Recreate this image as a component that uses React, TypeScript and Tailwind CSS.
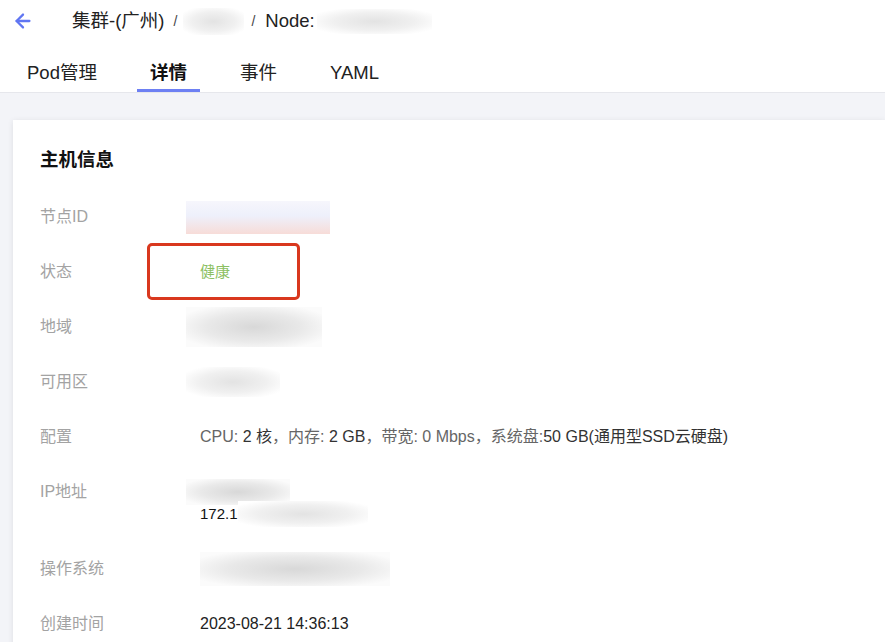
import React from "react";
import { ArrowLeft } from "lucide-react";

const font = { fontFamily: '"Liberation Sans", "Noto Sans CJK SC", sans-serif' };

function Blur({ w, h, tone = "gray", className = "" }: { w: number; h: number; tone?: "gray" | "pink" | "light"; className?: string }) {
  const bg =
    tone === "pink"
      ? "bg-[linear-gradient(180deg,#f6f6fc_0%,#eef0fb_45%,#f7dcd8_100%)]"
      : tone === "light"
      ? "bg-[radial-gradient(ellipse_at_center,#e3e3e3_0%,#f0f0f0_50%,#ffffff_85%)]"
      : "bg-[radial-gradient(ellipse_at_center,#d8d8d8_0%,#e9e9e9_50%,#fbfbfb_85%)]";
  return <span className={`block shrink-0 ${bg} ${className}`} style={{ width: w, height: h, marginTop: (22 - h) / 2, marginBottom: (22 - h) / 2 }} />;
}

function Row({ label, children, tall = false }: { label: string; children: React.ReactNode; tall?: boolean }) {
  return (
    <div className={`flex pt-[16px] ${tall ? "h-[77px]" : "h-[55px]"}`}>
      <div className="w-[160px] shrink-0 text-[16px] leading-[22px] text-[#a3a3a3]">{label}</div>
      <div className="text-[15px] leading-[22px] text-[#333] flex flex-col">{children}</div>
    </div>
  );
}

export default function App() {
  return (
    <div className="w-[885px] h-[642px] overflow-hidden bg-[#f3f4f8]" style={font}>
      <div className="bg-white border-b border-[#e6e7ec]">
        <div className="flex items-center h-[42px] pl-[12px]">
          <ArrowLeft size={22} strokeWidth={2.5} className="text-[#6076f2]" />
          <div className="flex items-center ml-[38px] text-[18.5px] text-[#222]">
            <span>集群-(广州)</span>
            <span className="ml-[9px] text-[14px] text-[#444]">/</span>
            <Blur w={61} h={27} tone="light" className="ml-[6px]" />
            <span className="ml-[7px] text-[14px] text-[#444]">/</span>
            <span className="ml-[10px]">Node:</span>
            <Blur w={115} h={25} tone="light" className="ml-[2px]" />
          </div>
        </div>
        <div className="flex pl-[14px] gap-[27px] h-[50px] items-end">
          {["Pod管理", "详情", "事件", "YAML"].map((t) => (
            <div
              key={t}
              className={`px-[13px] pb-[3px] text-[18.5px] leading-[26px] border-b-[3px] ${
                t === "详情" ? "border-[#6d80f3] font-bold text-[#111]" : "border-transparent text-[#222]"
              }`}
            >
              {t}
            </div>
          ))}
        </div>
      </div>

      <div className="ml-[13px] mt-[27px] bg-white shadow-[0_1px_6px_rgba(0,0,0,0.09)] pl-[27px] pt-[27px] pb-[20px] relative">
        <div className="text-[18.5px] leading-[26px] font-bold text-[#111] mb-[17px]">主机信息</div>

        <Row label="节点ID">
          <Blur w={144} h={33} tone="pink" className="-ml-[14px]" />
        </Row>
        <Row label="状态">
          <span className="text-[#8cc063]">健康</span>
        </Row>
        <Row label="地域">
          <Blur w={136} h={40} className="-ml-[14px]" />
        </Row>
        <Row label="可用区">
          <Blur w={94} h={30} tone="light" className="-ml-[14px]" />
        </Row>
        <Row label="配置">
          <span className="text-[16px]">
            <span className="text-[#666]">CPU: </span>
            <span>2 核</span>
            <span className="text-[#666]">，内存: </span>
            <span>2 GB</span>
            <span className="text-[#666]">，带宽: 0 Mbps，系统盘:</span>
            <span>50 GB(通用型SSD云硬盘)</span>
          </span>
        </Row>
        <Row label="IP地址" tall>
          <Blur w={104} h={26} className="-ml-[14px]" />
          <div className="flex items-center">
            <span className="text-[#111]">172.1</span>
            <Blur w={130} h={26} tone="light" />
          </div>
        </Row>
        <Row label="操作系统">
          <Blur w={190} h={34} />
        </Row>
        <Row label="创建时间">
          <span className="text-[16px] text-[#222]">2023-08-21 14:36:13</span>
        </Row>

        <div className="absolute left-[134px] top-[123px] w-[153px] h-[57px] border-[3px] border-[#d9381e] rounded-[5px]" />
      </div>
    </div>
  );
}
